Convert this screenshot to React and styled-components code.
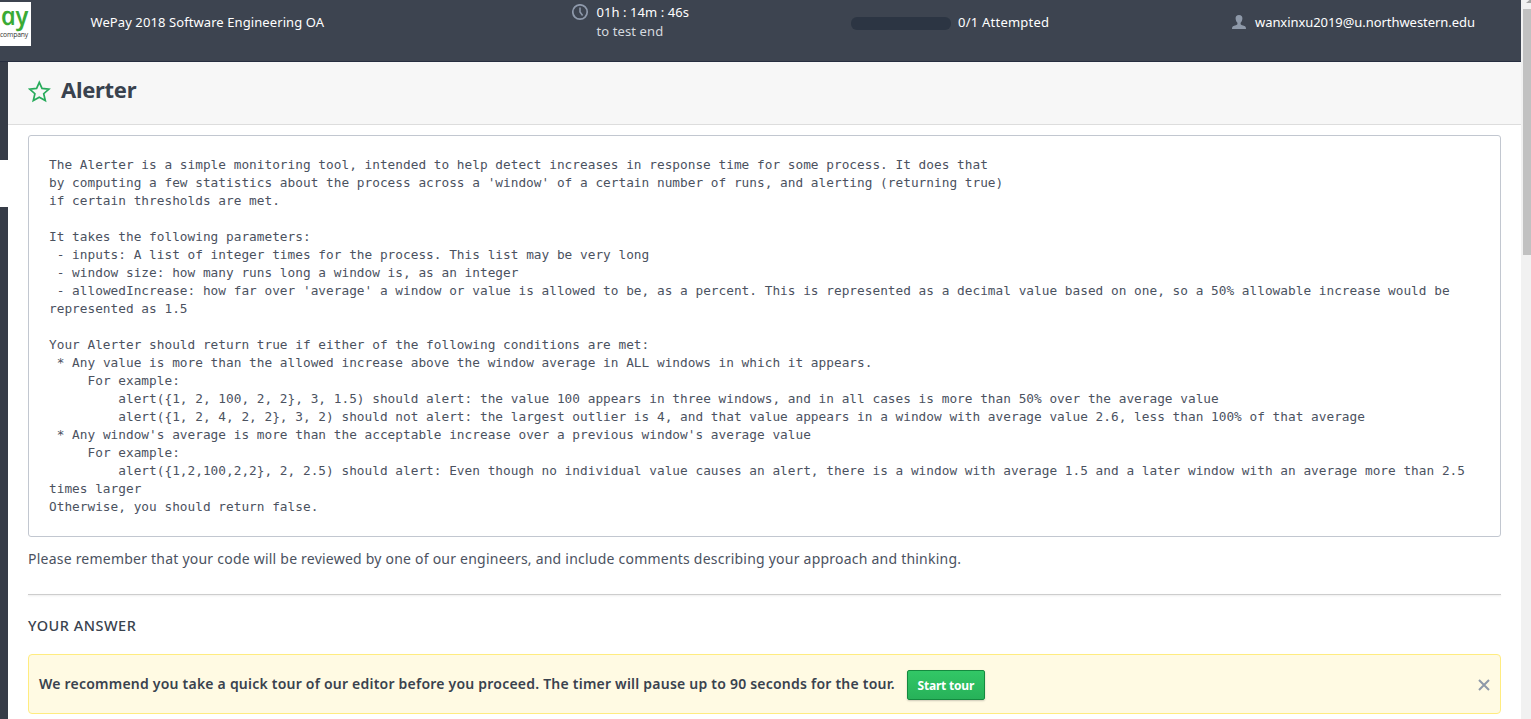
import React from "react";
import styled, { createGlobalStyle } from "styled-components";

const GlobalStyle = createGlobalStyle`
  * { box-sizing: border-box; }
  html, body { margin: 0; padding: 0; height: 100%; overflow: hidden; }
  body { background: #fff; font-family: "Noto Sans", "Open Sans", sans-serif; color: #39424e; }
`;

const Page = styled.div`
  display: flex;
  width: 1531px;
  height: 719px;
  overflow: hidden;
`;

const Window = styled.div`
  display: flex;
  flex-direction: column;
  width: 1521px;
`;

const Header = styled.header`
  display: flex;
  align-items: flex-start;
  height: 62px;
  flex: none;
  background: #3d4450;
  border-bottom: 1px solid #272e3f;
  color: #fff;
  white-space: nowrap;
`;

const Logo = styled.div`
  width: 31px;
  height: 44px;
  margin-top: 2px;
  background: #fff;
  display: flex;
  flex-direction: column;
  align-items: flex-start;
`;

const LogoName = styled.span`
  font: italic 600 26px/28px "Open Sans", sans-serif;
  letter-spacing: 0;
  color: #3aaa35;
  transform: skewX(12deg);
  margin-top: -1px;
`;

const LogoTag = styled.span`
  font: 500 6.800px/10px "Open Sans", sans-serif;
  letter-spacing: -0.15px;
  color: #333;
  margin-top: 1px;
`;

const Label = styled.span`
  font-size: ${(p) => p.$size || 13}px;
  font-weight: ${(p) => p.$weight || 400};
  letter-spacing: ${(p) => p.$track || 0}px;
  line-height: 19px;
  color: ${(p) => p.$color || "#fff"};
  white-space: nowrap;
`;

const TestName = styled.div`
  width: 481px;
  padding: 13px 0 0 59.5px;
  line-height: 19px;
  display: flex;
`;

const Timer = styled.div`
  width: 279px;
  margin-left: 60px;
  display: flex;
  padding-top: 3px;
  svg { margin: 1px 7.5px 0 0; flex: none; }
`;

const TimerText = styled.div`
  display: flex;
  flex-direction: column;
`;

const Progress = styled.div`
  width: 381px;
  display: flex;
  padding-top: 13px;
`;

const Track = styled.div`
  width: 100px;
  height: 13px;
  margin: 4px 7px 0 0;
  border-radius: 6px;
  background: #2c3543;
`;

const Account = styled.div`
  display: flex;
  padding-top: 13px;
  svg { margin: 2px 9px 0 0; flex: none; }
`;

const Body = styled.div`
  display: flex;
  flex: 1;
`;

const Rail = styled.div`
  width: 8px;
  flex: none;
  display: flex;
  flex-direction: column;
  background: #363c47;
`;

const RailCurrent = styled.div`
  margin-top: 98px;
  height: 47px;
  background: #fff;
`;

const Main = styled.main`
  width: 1513px;
`;

const TitleBar = styled.div`
  display: flex;
  height: 63px;
  padding: 18px 0 0 20px;
  background: #f7f7f7;
  border-bottom: 1px solid #dddddd;
`;

const Title = styled.h1`
  margin: -6px 0 0 10px;
  font-size: 22px;
  line-height: 30px;
  letter-spacing: -0.3px;
  font-weight: 700;
  color: #39424e;
`;

const Content = styled.div`
  padding: 10px 20px 0;
`;

const Statement = styled.pre`
  margin: 0;
  width: 1473px;
  height: 402px;
  padding: 20px 20px 0;
  border: 1px solid #c2c7d0;
  border-radius: 3px;
  white-space: pre-wrap;
  font: 12.785px/18px "DejaVu Sans Mono", monospace;
  letter-spacing: 0.01px;
  color: #4b525f;
`;

const Reminder = styled.p`
  margin: 11px 0 0;
  font-size: 14px;
  line-height: 22px;
  height: 22px;
  letter-spacing: 0.224px;
  color: #4b525f;
  white-space: nowrap;
`;

const Rule = styled.div`
  margin-top: 24px;
  height: 1px;
  background: #cdcdcd;
  box-shadow: 0 1px 2px rgba(0, 0, 0, 0.1);
`;

const AnswerHeading = styled.h2`
  margin: 19px 0 0;
  font-size: 14.5px;
  line-height: 22px;
  letter-spacing: 0.5px;
  font-weight: 500;
  color: #39424e;
`;

const Notice = styled.div`
  display: flex;
  align-items: center;
  width: 1473px;
  height: 60px;
  margin-top: 18px;
  padding: 0 10px 0 10px;
  background: #fffae3;
  border: 1px solid #ffec80;
  border-radius: 4px;
`;

const NoticeText = styled(Label)`
  margin-top: -2px;
`;

const StartButton = styled.button`
  width: 78px;
  height: 30px;
  margin: 2px 0 0 12px;
  padding: 0;
  border: 1px solid #148a3f;
  border-radius: 2px;
  background: linear-gradient(#32c766, #27b259);
  box-shadow: 0 1px 2px rgba(0, 0, 0, 0.2);
  color: #fff;
  font: 700 12px/28px "Noto Sans", sans-serif;
  letter-spacing: -0.2px;
  padding-top: 1px;
  white-space: nowrap;
`;

const CloseButton = styled.button`
  display: flex;
  margin: 1px 0 0 auto;
  padding: 0;
  border: 0;
  background: none;
`;

const Scrollbar = styled.div`
  display: flex;
  flex-direction: column;
  align-items: flex-end;
  width: 10px;
  background: #f1f1f1;
`;

const ScrollArrow = styled.div`
  height: 9px;
  width: 8px;
  display: flex;
`;

const Thumb = styled.div`
  width: 8px;
  height: 246px;
  background: #c1c1c1;
`;

const statement = `The Alerter is a simple monitoring tool, intended to help detect increases in response time for some process. It does that
by computing a few statistics about the process across a 'window' of a certain number of runs, and alerting (returning true)
if certain thresholds are met.

It takes the following parameters:
 - inputs: A list of integer times for the process. This list may be very long
 - window size: how many runs long a window is, as an integer
 - allowedIncrease: how far over 'average' a window or value is allowed to be, as a percent. This is represented as a decimal value based on one, so a 50% allowable increase would be represented as 1.5

Your Alerter should return true if either of the following conditions are met:
 * Any value is more than the allowed increase above the window average in ALL windows in which it appears.
     For example:
         alert({1, 2, 100, 2, 2}, 3, 1.5) should alert: the value 100 appears in three windows, and in all cases is more than 50% over the average value
         alert({1, 2, 4, 2, 2}, 3, 2) should not alert: the largest outlier is 4, and that value appears in a window with average value 2.6, less than 100% of that average
 * Any window's average is more than the acceptable increase over a previous window's average value
     For example:
         alert({1,2,100,2,2}, 2, 2.5) should alert: Even though no individual value causes an alert, there is a window with average 1.5 and a later window with an average more than 2.5 times larger
Otherwise, you should return false.`;

const ClockIcon = () => (
  <svg width="17" height="17" viewBox="0 0 17 17" fill="none" stroke="#8e99ab" strokeWidth="1.7">
    <circle cx="8" cy="8" r="7.2" />
    <path d="M8 3.6V8l2.6 3.5" strokeWidth="1.5" />
  </svg>
);

const UserIcon = () => (
  <svg width="14" height="14" viewBox="0 0 14 14" fill="#8e99a9">
    <path d="M7 0C4.700 0 3.500 1.400 3.600 3.500c.1 1.800.8 3.300 1.800 4.200v1.600c-.5.8-2.200 1.100-3.700 1.600C.5 11.300 0 12 0 14h14c0-2-.5-2.700-1.700-3.100-1.500-.5-3.200-.8-3.700-1.600V7.700c1-.9 1.700-2.400 1.800-4.200C10.500 1.400 9.300 0 7 0z" />
  </svg>
);

const StarIcon = () => (
  <svg width="23" height="23" viewBox="0 0 23 23" fill="none" stroke="#27ab5b" strokeWidth="1.7">
    <path d="M11.300 2.400l2.700 6 6.900.7-5.200 4.600 1.600 6.900-6-3.400-6 3.400 1.600-6.900L1.700 9.100l6.900-.7z" />
  </svg>
);

const CloseIcon = () => (
  <svg width="12" height="12" viewBox="0 0 12 12" stroke="#8e99a9" strokeWidth="2">
    <path d="M1 1l10 10M11 1L1 11" />
  </svg>
);

export default function App() {
  return (
    <>
      <GlobalStyle />
      <Page>
        <Window>
          <Header>
            <Logo>
              <LogoName>ay</LogoName>
              <LogoTag>company</LogoTag>
            </Logo>
            <TestName>
              <Label $track={0.09}>WePay 2018 Software Engineering OA</Label>
            </TestName>
            <Timer>
              <ClockIcon />
              <TimerText>
                <Label $track={0.07}>01h : 14m : 46s</Label>
                <Label $track={0.1} $color="#d5d9df">to test end</Label>
              </TimerText>
            </Timer>
            <Progress>
              <Track />
              <Label $track={0.23}>0/1 Attempted</Label>
            </Progress>
            <Account>
              <UserIcon />
              <Label $track={-0.06}>wanxinxu2019@u.northwestern.edu</Label>
            </Account>
          </Header>
          <Body>
            <Rail>
              <RailCurrent />
            </Rail>
            <Main>
              <TitleBar>
                <StarIcon />
                <Title>Alerter</Title>
              </TitleBar>
              <Content>
                <Statement>{statement}</Statement>
                <Reminder>
                  Please remember that your code will be reviewed by one of our engineers, and include
                  comments describing your approach and thinking.
                </Reminder>
                <Rule />
                <AnswerHeading>YOUR ANSWER</AnswerHeading>
                <Notice>
                  <NoticeText $size={14} $weight={600} $track={0.22} $color="#39424e">
                    We recommend you take a quick tour of our editor before you proceed. The timer will
                    pause up to 90 seconds for the tour.
                  </NoticeText>
                  <StartButton>Start tour</StartButton>
                  <CloseButton aria-label="Close">
                    <CloseIcon />
                  </CloseButton>
                </Notice>
              </Content>
            </Main>
          </Body>
        </Window>
        <Scrollbar>
          <ScrollArrow>
            <svg width="8" height="9" viewBox="0 0 8 9">
              <path d="M3 3L6.500 0H8V3z" fill="#a3a3a3" />
            </svg>
          </ScrollArrow>
          <Thumb />
        </Scrollbar>
      </Page>
    </>
  );
}
